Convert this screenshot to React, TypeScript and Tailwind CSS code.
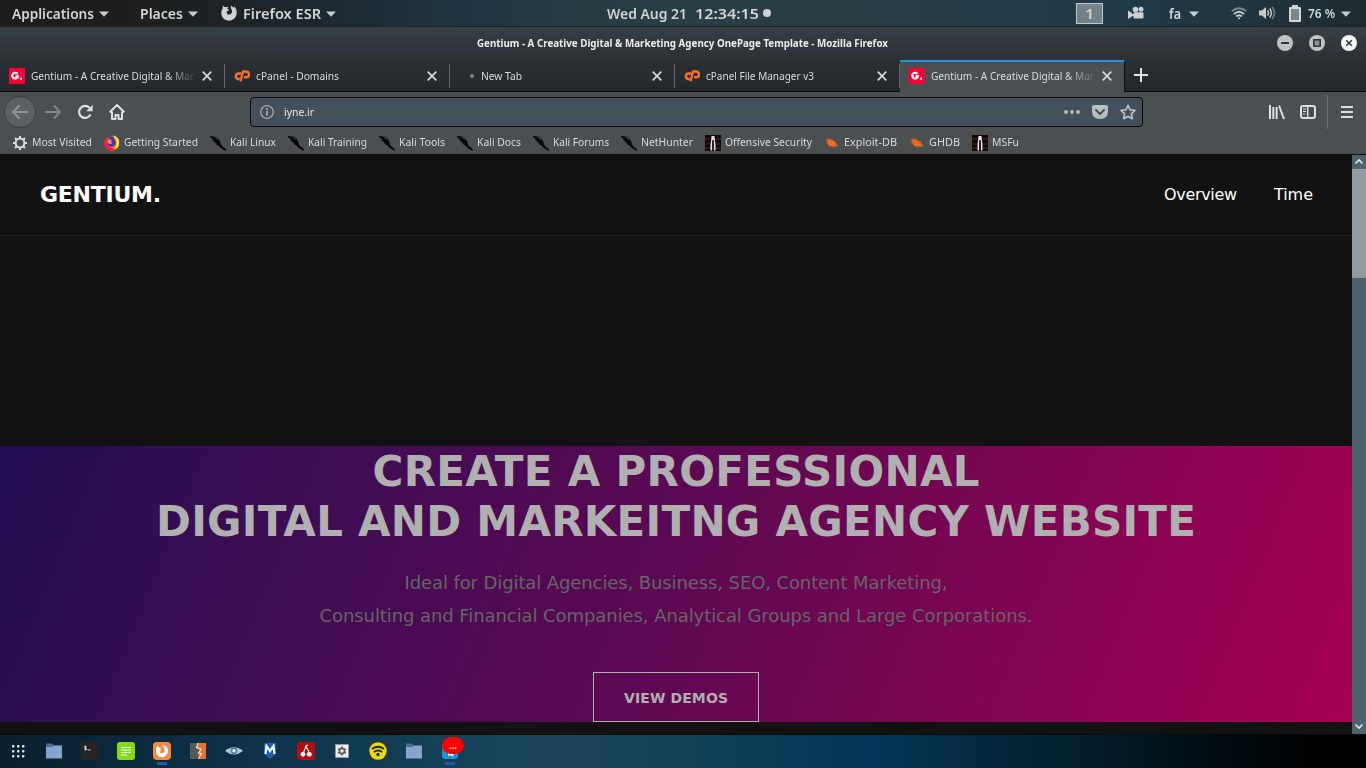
import { useLayoutEffect, useRef, type ReactNode } from 'react';

type FitProps = { w: number; children: string; className?: string; track?: boolean };

/* One line of text set to an exact measure, by condensing or by tracking. */
function Fit({ w, children, className = '', track = false }: FitProps) {
  const ref = useRef<HTMLSpanElement>(null);
  useLayoutEffect(() => {
    const el = ref.current;
    if (!el) return;
    el.style.transform = 'none';
    el.style.letterSpacing = 'normal';
    const natural = el.getBoundingClientRect().width;
    if (track) el.style.letterSpacing = `${(w - natural) / (children.length - 1)}px`;
    else el.style.transform = `scaleX(${w / natural})`;
  }, [w, children, track]);
  return (
    <span className={`block shrink-0 whitespace-pre ${className}`} style={{ width: w }}>
      <span ref={ref} className="inline-block origin-left">{children}</span>
    </span>
  );
}

const Caret = () => (
  <svg className="mt-px h-[6px] w-[10px] shrink-0" viewBox="0 0 10 6"><path d="M0 .5h10L5 5.7z" fill="#c9cccd" /></svg>
);

const FoxGlyph = ({ className, color }: { className: string; color: string }) => (
  <svg className={className} viewBox="0 0 16 16" fill={color}>
    <path d="M2.2.6C2.8 1.8 3.6 2.2 4.6 2.3c1-.5 2-.5 2.8-.2C6.7 2.7 6.3 3.3 6.2 4c.8.1 1.5.4 1.9.7-.4.9-1.4 1.1-2 1.6-.7.9-.4 2.4.6 3 1.5.8 3.1-.3 4-1.4.6-1.6.1-3.3-.6-4.4C9.700 2.300 9.700 1.300 10.200.400c.7 1 1.700 1.400 2.700 2.200.400-.400.400-.800.300-1.300 1.700 1.700 2.600 4 2.500 6.500C15.600 12.300 12.300 15.700 8 15.700S.3 12.300.3 8c0-2 .6-3.500 1.400-4.600C1.500 2.500 1.700 1.400 2.200.6z" />
  </svg>
);

function TopBar() {
  return (
    <header className="flex h-[27px] shrink-0 items-center border-b border-[#1b2327] bg-[linear-gradient(90deg,#1d1d1d_0%,#1d1f20_12%,#1c2a33_25%,#1f3543_34%,#273d45_45%,#2a3e46_62%,#203b4a_76%,#203743_90%,#1e2a2f_100%)] text-[15px] font-semibold leading-[26px] text-[#d3d5d5]">
      <div className="flex w-full items-center pl-3">
        <Fit w={82}>Applications</Fit>
        <div className="ml-[5px] mr-[31px]"><Caret /></div>
        <Fit w={43}>Places</Fit>
        <div className="ml-[5px] mr-[23px]"><Caret /></div>
        <FoxGlyph className="mr-[6px] size-4" color="#d0d2d3" />
        <Fit w={78}>Firefox ESR</Fit>
        <div className="ml-[5px]"><Caret /></div>
        <div className="ml-[271px] flex items-center">
          <Fit w={80}>Wed Aug 21</Fit>
          <Fit w={64} className="ml-2">12:34:15</Fit>
          <span className="ml-1 size-2 rounded-full bg-[#d0d2d3]" />
        </div>
        <div className="ml-[305px] flex h-[21px] w-[27px] items-center justify-center border border-[#c3c7c9] bg-[#73818a] text-[15px] leading-none">1</div>
        <svg className="ml-[25px] h-[14px] w-4 shrink-0" viewBox="0 0 16 14" fill="#ccced0">
          <circle cx="7.500" cy="3.500" r="2.800" /><circle cx="13" cy="3.300" r="2.500" />
          <rect x="5.500" y="6.300" width="10" height="6.200" rx="1.200" /><path d="M0 4.500 4 7v3.500L0 13z" /><path d="M4 8h2v2H4z" />
        </svg>
        <Fit w={12} className="ml-[25px]">fa</Fit>
        <div className="ml-2"><Caret /></div>
        <svg className="ml-[32px] h-[13px] w-4 shrink-0" viewBox="0 0 16 13" fill="none" stroke="#ccced0" strokeWidth="1.800">
          <path d="M.8 4.300Q8-1.800 15.200 4.300" strokeOpacity=".55" /><path d="M3 7Q8 2.500 13 7M5.200 9.500Q8 7 10.800 9.500" /><circle cx="8" cy="11.300" r="1" fill="#ccced0" stroke="none" />
        </svg>
        <svg className="ml-[12px] h-4 w-[17px] shrink-0" viewBox="0 0 17 16" fill="none" stroke="#ccced0" strokeWidth="1.500">
          <path d="M0 5.500h3L7 2v12l-4-3.500H0z" fill="#ccced0" stroke="none" /><path d="M8.500 5.500q2 2.500 0 5M10.700 3.500q3.500 4.500 0 9" /><path d="M13 2q5 6 0 12" strokeOpacity=".5" />
        </svg>
        <svg className="ml-[13px] h-[17px] w-3 shrink-0" viewBox="0 0 12 17" fill="#d3d5d5">
          <path d="M3 0h6v2h2q1 0 1 1v13q0 1-1 1H1q-1 0-1-1V3q0-1 1-1h2z" /><path d="M2 4h8v11H2z" fill="#7b878d" />
        </svg>
        <Fit w={27} className="ml-[7px] text-[13px]">76 %</Fit>
        <div className="ml-[6px]"><Caret /></div>
      </div>
    </header>
  );
}

const GFav = () => (
  <svg className="size-4 shrink-0" viewBox="0 0 16 16">
    <path fill="#ff0036" d="M0 0h16v16H0z" />
    <path d="M8.600 6A2.900 2.900 0 1 0 9 8.400H6.500" fill="none" stroke="#fff" strokeWidth="2.100" /><circle cx="12" cy="10.700" r="1.150" fill="#fff" />
  </svg>
);
const CFav = () => (
  <svg className="size-4 shrink-0" viewBox="0 0 16 16" fill="none" stroke="#ff6c2c" strokeWidth="2.400" strokeLinejoin="round">
    <path d="M7.200 5.500H4.500a2.800 2.800 0 0 0-.6 5.500h1.900" /><path d="M6.600 13.200 9 3.500h2.900a2.900 2.900 0 0 1 .4 5.800H10" />
  </svg>
);
const DotFav = () => <span className="ml-[11px] mr-px size-1 shrink-0 rounded-full bg-[#7e8285]" />;

type TabData = { icon: ReactNode; label: string; w: number; fade?: boolean; active?: boolean };
const tabs: TabData[] = [
  { icon: <GFav />, label: 'Gentium - A Creative Digital & Mar', w: 163, fade: true },
  { icon: <CFav />, label: 'cPanel - Domains', w: 83 },
  { icon: <DotFav />, label: 'New Tab', w: 41 },
  { icon: <CFav />, label: 'cPanel File Manager v3', w: 108 },
  { icon: <GFav />, label: 'Gentium - A Creative Digital & Mar', w: 163, fade: true, active: true },
];

function Tab({ icon, label, w, fade, active }: TabData) {
  return (
    <div className={active
      ? 'relative z-10 -mb-px flex h-8 w-[225px] items-center border-t-2 border-r border-t-[#1f8fd6] border-r-[#0c0d0e] bg-[#4a4f52] pb-[2px] pl-[9px]'
      : 'flex h-8 w-[225px] items-center pl-[9px] pt-[2px]'}>
      {icon}
      <div className={`ml-[6px] w-[164px] shrink-0 ${fade ? '[mask-image:linear-gradient(90deg,#000_82%,transparent_102%)]' : ''}`}>
        <Fit w={w}>{label}</Fit>
      </div>
      <svg className="ml-[7px] size-[10px] shrink-0" viewBox="0 0 10 10"><path d="M.7.7l8.600 8.600M9.300.7.7 9.300" stroke="#d8dada" strokeWidth="1.700" /></svg>
      {!active && <span className="ml-auto h-6 w-px bg-[#65696c]" />}
    </div>
  );
}

const winBtn = 'size-4';
function WindowChrome() {
  return (
    <div className="flex h-[65px] shrink-0 flex-col border-b border-[#08090a] bg-[linear-gradient(#384046_0%,#30363b_30%,#2b3035_55%,#24282b_100%)]">
      <div className="flex h-8 items-center pl-[477px]">
        <Fit w={411} className="text-[11px] font-bold text-[#eceeee]">Gentium - A Creative Digital & Marketing Agency OnePage Template - Mozilla Firefox</Fit>
        <div className="ml-[389px] flex gap-4">
          <svg className={winBtn} viewBox="0 0 16 16"><circle cx="8" cy="8" r="8" fill="#c0c2c3" /><path d="M4 8h8" stroke="#30363b" strokeWidth="2" /></svg>
          <svg className={winBtn} viewBox="0 0 16 16"><circle cx="8" cy="8" r="8" fill="#c0c2c3" /><path d="M4.800 4.800h6.400v6.400H4.800z" fill="#8b8f91" stroke="#30363b" strokeWidth="1.600" /></svg>
          <svg className={winBtn} viewBox="0 0 16 16"><circle cx="8" cy="8" r="8" fill="#f6f7f7" /><path d="m5.200 5.200 5.600 5.600M10.800 5.200l-5.600 5.600" stroke="#30363b" strokeWidth="1.500" /></svg>
        </div>
      </div>
      <div className="flex h-8 items-end text-[11px] text-[#dadcdc]">
        {tabs.map((t, i) => <Tab key={i} {...t} />)}
        <svg className="mb-[9px] ml-[9px] size-[14px]" viewBox="0 0 14 14"><path d="M7 0v14M0 7h14" stroke="#e1e3e3" strokeWidth="2" /></svg>
      </div>
    </div>
  );
}

function NavBar() {
  return (
    <div className="flex h-[39px] shrink-0 items-center pl-1">
      <svg className="size-8" viewBox="0 0 32 32"><circle cx="16" cy="16" r="15.500" fill="#5d6164" stroke="#3b3f42" /><path d="M24 16H9M15.500 9.500 9 16l6.500 6.500" fill="none" stroke="#909496" strokeWidth="2" /></svg>
      <svg className="ml-[9px] size-4" viewBox="0 0 16 16"><path d="M0 8h15M9 1.500 15 8l-6 6.500" fill="none" stroke="#818587" strokeWidth="2" /></svg>
      <svg className="ml-4 size-4" viewBox="0 0 16 16" fill="none" stroke="#dcdedf"><path d="M13.500 10.500A6 6 0 1 1 12.600 4" strokeWidth="2.200" /><path d="M15.700.7v6.500H9.200z" fill="#dcdedf" stroke="none" /></svg>
      <svg className="ml-4 size-4" viewBox="0 0 16 16" fill="none" stroke="#dcdedf" strokeWidth="2"><path d="M.6 8.300 8 1l7.400 7.300M3 7.500V15h3.500v-4h3v4H13V7.500" strokeLinejoin="round" /></svg>
      <div className="ml-[125px] flex h-[30px] w-[893px] items-center rounded-[4px] border border-[#090a0b] bg-[#45505c] pl-[9px] text-[11px] text-[#e6e8e9]">
        <svg className="mr-[10px] size-[14px]" viewBox="0 0 14 14"><circle cx="7" cy="7" r="6.300" fill="none" stroke="#a6acb1" strokeWidth="1.200" /><path d="M6.200 6h1.600v4.500H6.200zM6.200 3.300h1.600v1.600H6.200z" fill="#b4b9bd" /></svg>
        <Fit w={30} className="pt-px">iyne.ir</Fit>
        <svg className="ml-auto mr-3 h-4 w-4" viewBox="0 0 16 16" fill="#bbbfc2"><circle cx="2" cy="8" r="1.900" /><circle cx="8" cy="8" r="1.900" /><circle cx="14" cy="8" r="1.900" /></svg>
        <svg className="mr-3 size-4" viewBox="0 0 16 16"><path d="M2 1h12q2 0 2 2v4q0 8-8 8T0 7V3q0-2 2-2z" fill="#bbbfc2" /><path d="M4 6l4 4 4-4" fill="none" stroke="#45505c" strokeWidth="2" strokeLinecap="round" /></svg>
        <svg className="mr-[6px] size-4" viewBox="0 0 16 16"><path d="m8 1.300 2.100 4.500 4.900.6-3.600 3.400.9 4.900L8 12.300l-4.300 2.400.9-4.900L1 6.400l4.900-.6z" fill="none" stroke="#bbbfc2" strokeWidth="1.700" strokeLinejoin="round" /></svg>
      </div>
      <svg className="ml-[126px] size-4" viewBox="0 0 16 16"><path d="M1 1v14M4.300 3v12M7.600 3v12M10 1.500l5 13.500" stroke="#dcdedf" fill="none" strokeWidth="2" /></svg>
      <svg className="ml-[15px] size-4" viewBox="0 0 16 16" fill="none" stroke="#dcdedf"><rect x="1" y="2" width="14" height="12" rx="2" strokeWidth="2" /><path d="M7.700 2v12" strokeWidth="1.500" /><path d="M3 5h3M3 7.500h3M3 10h2" strokeWidth="1" /></svg>
      <span className="ml-[11px] h-[34px] w-px bg-[#6b6f72]" />
      <svg className="ml-[13px] h-3 w-3" viewBox="0 0 12 12" stroke="#dcdedf" strokeWidth="2"><path d="M0 1h12M0 6h12M0 11h12" /></svg>
    </div>
  );
}

const Gear = () => (
  <svg className="size-4 shrink-0" viewBox="0 0 16 16" fill="none" stroke="#dcdedf">
    <circle cx="8" cy="8" r="4.400" strokeWidth="2" /><path d="M8 1v3M8 12v3M1 8h3M12 8h3M3 3l2 2M11 11l2 2M3 13l2-2M11 5l2-2" strokeWidth="2" />
  </svg>
);
const Firefox = () => (
  <svg className="size-4 shrink-0" viewBox="0 0 16 16">
    <circle cx="8.500" cy="8" r="6.300" fill="#ff8a10" />
    <path d="M9 .5c4 1 6.500 4 6 8.500-.5 4-3.500 6.500-7 6.500-4.500 0-7.500-3-7.300-7.300C.8 5.500 1.500 4 3 2.500c0 1 .5 1.500 1.500 1.800z" fill="#ff8a10" />
    <path d="M.7 8C.5 12 3.500 15.500 8 15.500c2.500 0 4.500-1.200 5.700-3C9 15 4.500 12 3.500 8 3.200 6.500 3.500 5.500 4 4.500L2.800 3C1.500 4.500.8 6 .7 8z" fill="#ff1445" />
    <path d="M9 .5c2 2.500 4.500 5 3.600 9.500-.5 2-2 3.500-3.600 4.500 4-.5 6-3 6-5.500 1-4.500-2-7.800-6-8.500z" fill="#ffe82a" />
    <path d="M4.500 3.800C6 1.800 8 1.200 9.300 1.500c.2 2 2.500 3.500 2.400 6.500-.2 2.500-2 3.800-3.900 3.700-2-.1-3.500-1.200-3.900-3z" fill="#3a2fd0" />
    <path d="M4 5c1-.8 3-.5 4 .8L6.500 7l2.300.8-2 1.200C5 9.500 3.700 7.500 4 5z" fill="#ff9822" />
  </svg>
);
const Kali = () => (
  <svg className="size-4 shrink-0" viewBox="0 0 16 16"><path d="M0 1 3.500 1.800 6 3.500 7.500 4.800 8.500 4.500 10 6.500 10.500 9 12 11.500 15 13.500 15.800 15.500 13.500 14.500 10.500 12.500 8.500 10.300 6.500 9.300 5.500 7.500 3.800 6 3 4 .5 2.200z" fill="#050606" stroke="#050606" strokeWidth=".5" /><path d="m4 1 3.500 1.500L9 4M2 5l2 1.500" stroke="#262a2c" fill="none" strokeWidth=".9" /></svg>
);
const Offsec = () => (
  <svg className="size-4 shrink-0" viewBox="0 0 16 16"><path d="M0 0h16v16H0z" fill="#190607" /><path d="M0 4h5M11 4h5M1 9h3M12 9h3M0 13h5M11 13h5" stroke="#532a2c" /><path d="M6.500 1h3l.5 5 .5 3v6.500H9V9l-.3-4H7.500L7 9v6.500H5.500V9L6 6z" fill="#e7e5e3" /><path d="M7.500 5h1.200L9 15H7z" fill="#292b2e" /></svg>
);
const Bug = () => (
  <svg className="size-4 shrink-0" viewBox="0 0 16 16"><path d="M2 5q3-2.500 6 0 4 1.500 5 5l1.500 1.500-3-.2Q6 13 3.500 8.500z" fill="#f46a17" /><path d="M5 5 3.500 3M8 5 6.800 2.500M3 8 .8 9M6 11l-2 1.500M9 12l-1 1.700M1 5.500l3 1M11 6l2 .5" stroke="#8f5736" strokeWidth=".7" fill="none" /></svg>
);

const marks: { icon: ReactNode; label: string; w: number }[] = [
  { icon: <Gear />, label: 'Most Visited', w: 60 },
  { icon: <Firefox />, label: 'Getting Started', w: 74 },
  { icon: <Kali />, label: 'Kali Linux', w: 46 },
  { icon: <Kali />, label: 'Kali Training', w: 59 },
  { icon: <Kali />, label: 'Kali Tools', w: 46 },
  { icon: <Kali />, label: 'Kali Docs', w: 44 },
  { icon: <Kali />, label: 'Kali Forums', w: 56 },
  { icon: <Kali />, label: 'NetHunter', w: 52 },
  { icon: <Offsec />, label: 'Offensive Security', w: 87 },
  { icon: <Bug />, label: 'Exploit-DB', w: 53 },
  { icon: <Bug />, label: 'GHDB', w: 31 },
  { icon: <Offsec />, label: 'MSFu', w: 27 },
];

function Bookmarks() {
  return (
    <div className="flex h-[24px] shrink-0 items-center gap-3 border-b border-[#0d0e0e] pl-3 text-[11px] text-[#d9dbdb]">
      {marks.map((m) => (
        <div key={m.label} className="flex items-center gap-1">{m.icon}<Fit w={m.w}>{m.label}</Fit></div>
      ))}
    </div>
  );
}

const Arrow = ({ d }: { d: string }) => (
  <svg className="size-[14px]" viewBox="0 0 14 14"><path d={d} fill="none" stroke="#e3e8ea" strokeWidth="1.600" /></svg>
);

function Page() {
  return (
    <main className="flex h-[579px] shrink-0 bg-[#121212] font-['DejaVu_Sans',sans-serif]">
      <div className="flex w-[1352px] flex-col">
        <nav className="flex h-[81px] shrink-0 items-center border-b border-[#1f1f1f] pl-10 text-white">
          <Fit w={121} track className="pb-[2px] text-[22px] font-bold">GENTIUM.</Fit>
          <Fit w={73} track className="ml-[1003px] text-[16px]">Overview</Fit>
          <Fit w={39} track className="ml-[37px] text-[16px]">Time</Fit>
        </nav>
        <section className="mt-[210px] flex h-[276px] flex-col items-center bg-[linear-gradient(112deg,#230f52_0%,#5b0953_48%,#a50052_100%)]">
          <h1 className="flex flex-col items-center pt-px text-[42px] font-bold leading-[50px] text-[#b0b0b0]">
            <Fit w={607} track>CREATE A PROFESSIONAL</Fit>
            <Fit w={1040} track>DIGITAL AND MARKEITNG AGENCY WEBSITE</Fit>
          </h1>
          <p className="mt-[19px] flex flex-col items-center text-[18px] leading-[33px] text-[#666]">
            <Fit w={543} track>Ideal for Digital Agencies, Business, SEO, Content Marketing,</Fit>
            <Fit w={713} track>Consulting and Financial Companies, Analytical Groups and Large Corporations.</Fit>
          </p>
          <button className="mt-10 flex h-[50px] w-[166px] items-center justify-center border border-[#b0b0b0] pt-[3px] text-[14px] font-bold text-[#b0b0b0]">
            <Fit w={104} track>VIEW DEMOS</Fit>
          </button>
        </section>
      </div>
      <div className="flex w-[14px] flex-col bg-[#4d626d]">
        <Arrow d="m3.500 8.500 3.500-3.500 3.500 3.500" />
        <div className="h-[109px] bg-[#939b9e]" />
        <div className="mt-auto"><Arrow d="m3.500 4.500 3.500 3.500 3.500-3.500" /></div>
      </div>
    </main>
  );
}

const box = 'size-[18px] shrink-0';
const Folder = () => (
  <svg className={box} viewBox="0 0 18 18"><path d="M1 1.500h6L8.500 3H17v6H1z" fill="#4b708d" /><path d="M1 5h6l1.500-1H17v12.500H1z" fill="#87a4cf" /></svg>
);

function Dock() {
  return (
    <footer className="flex h-[34px] shrink-0 items-center gap-[18px] border-t border-[#080c0f] bg-[linear-gradient(90deg,#0a2030_0%,#0c2b40_12%,#113a54_26%,#194459_37%,#1e4557_41%,#0e3e57_54%,#043456_64%,#042c44_70%,#03202f_78%,#010e15_88%,#000_96%)] pb-px pl-[9px]">
      <svg className={box} viewBox="0 0 18 18" fill="#e4e8ea">{[3, 8, 13].map((y) => [3, 8, 13].map((x) => <rect key={`${x}-${y}`} x={x} y={y} width="2.400" height="2.400" rx=".7" />))}</svg>
      <Folder />
      <svg className={box} viewBox="0 0 18 18"><rect width="18" height="18" rx="3" fill="#242424" /><path d="M5.500 4.500H3.600v1.300l1.900.4v1.400H3.300M4.500 3.500v5M6.500 8h3.200" fill="none" stroke="#d7d7d7" strokeWidth=".9" /></svg>
      <svg className={box} viewBox="0 0 18 18"><rect width="18" height="18" rx="3" fill="#84d91d" /><path d="M4 5.500h10M4 8h10M4 10.500h10M4 13h6" stroke="#efffd5" strokeWidth="1.200" /></svg>
      <div className="relative size-[18px] shrink-0">
        <svg className={box} viewBox="0 0 18 18"><rect width="18" height="18" rx="4" fill="#f48a40" /><path d="M9 2.800c4 .4 6 3 6 6.200a6 6 0 0 1-12 .6C2.800 7 3.500 5 4.500 3.800l1.200 1.500 2.200.2L7 7.300l1.500.7-2 1.200c.5 2.500 4.500 2.500 5.200-.2C12.200 6.500 10 5 9 2.800z" fill="#fff" /></svg>
        <span className="absolute left-1 top-5 h-[3px] w-[10px] bg-[#235b9e]" />
      </div>
      <svg className={box} viewBox="0 0 18 18"><path d="M1 1h16v16H1z" fill="#e9722c" /><path d="M1 1h8L7 6l4 2-2 4 1 5H1z" fill="#53585b" /><path d="M9 1 7.500 5.500 12 7l-2.500 4 3 .5L9.500 17" fill="none" stroke="#dedfdb" strokeWidth="1.200" /></svg>
      <svg className={box} viewBox="0 0 18 18"><path d="M0 9Q9 1.500 18 9 9 16 0 9z" fill="#a8ccdc" /><circle cx="9" cy="8.700" r="3.300" fill="#55798b" /><circle cx="9" cy="8.700" r="1.700" fill="#e6f7ff" /></svg>
      <svg className={box} viewBox="0 0 18 18"><path d="M3 2q6-3 12 0v10l-6 5-6-5z" fill="#1d5ead" /><path d="m4.500 12 1-8L9 9l3.500-5 1 8" fill="none" stroke="#f0f5fa" strokeWidth="2.200" /></svg>
      <svg className={box} viewBox="0 0 18 18"><rect width="18" height="18" rx="3" fill="#b20b0e" /><path d="M6 12 9 4l4 8M9 4l2-1" fill="none" stroke="#fff" strokeWidth="1.100" /><circle cx="6" cy="12.300" r="2.400" fill="#fff" /><circle cx="12.300" cy="12.300" r="2.400" fill="#fff" /></svg>
      <svg className={box} viewBox="0 0 18 18"><path d="M2.500 2.500h13v13h-13z" fill="#ececea" stroke="#9d9d99" strokeWidth=".7" /><circle cx="9" cy="9" r="2.600" fill="none" stroke="#5b5b5b" strokeWidth="1.600" /><path d="M9 4.500v2M9 11.500v2M5.100 6.800l1.700 1M11.200 10.200l1.700 1M5.100 11.200l1.700-1M11.200 7.800l1.700-1" stroke="#5b5b5b" strokeWidth="1.500" /></svg>
      <svg className={box} viewBox="0 0 18 18"><path d="M0 0h18v18H0z" fill="#35372a" /><circle cx="9" cy="9" r="8.700" fill="#e8da11" /><path d="M3 7q6-4.500 12 0M4.800 10q4.200-3 8.400 0" fill="none" stroke="#292d1a" strokeWidth="1.900" /><circle cx="9" cy="12.500" r="1.700" fill="#292d1a" /></svg>
      <Folder />
      <div className="relative size-[18px] shrink-0">
        <svg className={box} viewBox="0 0 18 18"><rect x="1" y="1" width="16" height="16" rx="3" fill="#1696d6" /><path d="m4 10 9-4-1 9-3-2-2 1v-3z" fill="#fff" /></svg>
        <div className="absolute -top-[5px] left-px flex h-[17px] w-[22px] items-center justify-center rounded-full bg-[#f00]">
          <span className="text-[9px] font-bold leading-none text-white">...</span>
        </div>
        <span className="absolute left-1 top-5 h-[3px] w-[10px] bg-[#235b9e]" />
      </div>
    </footer>
  );
}

export default function App() {
  return (
    <div className="flex h-[768px] w-[1366px] flex-col overflow-hidden bg-[#4a4f52] font-['Noto_Sans',sans-serif]">
      <TopBar />
      <WindowChrome />
      <NavBar />
      <Bookmarks />
      <Page />
      <Dock />
    </div>
  );
}
